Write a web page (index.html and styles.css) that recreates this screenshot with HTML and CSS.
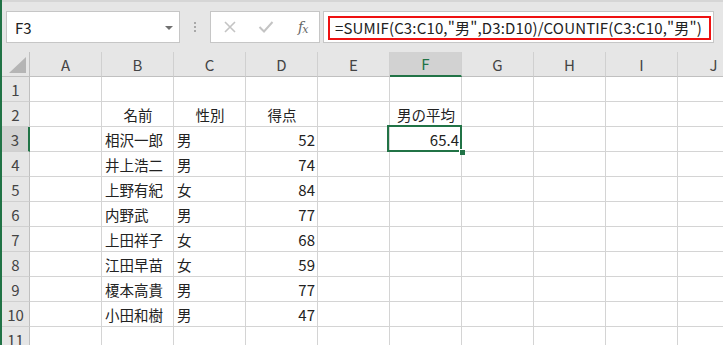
FILE: index.html
```html
<!DOCTYPE html>
<html lang="ja">
<head>
  <meta charset="UTF-8" />
  <title>SUMIF / COUNTIF</title>
  <link rel="stylesheet" href="styles.css">
</head>
<body>
  <div class="window">
    <!-- 数式バー -->
    <div class="formula-row">
      <div class="name-box">
        <span>F3</span>
        <span class="drop"></span>
      </div>
      <div class="grip"><i></i><i></i><i></i></div>
      <div class="fx-buttons">
        <svg class="ico cancel" width="14" height="14" viewBox="0 0 14 14"><path d="M2 2 L12 12 M12 2 L2 12" stroke="#c4c4c4" stroke-width="1.6" fill="none"/></svg>
        <svg class="ico ok" width="16" height="14" viewBox="0 0 16 14"><path d="M1.5 7 L6 11.5 L14.5 2" stroke="#c4c4c4" stroke-width="2" fill="none"/></svg>
        <span class="fx">f<sub>x</sub></span>
      </div>
      <div class="formula-box">
        <span class="formula">=SUMIF(C3:C10,"男",D3:D10)/COUNTIF(C3:C10,"男")</span>
      </div>
    </div>

    <!-- シート -->
    <div class="sheet">
      <div class="corner"><span class="tri"></span></div>
      <div class="col-head">A</div>
      <div class="col-head">B</div>
      <div class="col-head">C</div>
      <div class="col-head">D</div>
      <div class="col-head">E</div>
      <div class="col-head active">F</div>
      <div class="col-head">G</div>
      <div class="col-head">H</div>
      <div class="col-head">I</div>
      <div class="col-head">J</div>

      <div class="row-head">1</div>
      <div class="cell"></div><div class="cell"></div><div class="cell"></div><div class="cell"></div><div class="cell"></div><div class="cell"></div><div class="cell"></div><div class="cell"></div><div class="cell"></div><div class="cell"></div>

      <div class="row-head">2</div>
      <div class="cell"></div>
      <div class="cell center">名前</div>
      <div class="cell center">性別</div>
      <div class="cell center">得点</div>
      <div class="cell"></div>
      <div class="cell center">男の平均</div>
      <div class="cell"></div><div class="cell"></div><div class="cell"></div><div class="cell"></div>

      <div class="row-head active">3</div>
      <div class="cell"></div>
      <div class="cell">相沢一郎</div>
      <div class="cell">男</div>
      <div class="cell num">52</div>
      <div class="cell"></div>
      <div class="cell num selected">65.4</div>
      <div class="cell"></div><div class="cell"></div><div class="cell"></div><div class="cell"></div>

      <div class="row-head">4</div>
      <div class="cell"></div><div class="cell">井上浩二</div><div class="cell">男</div><div class="cell num">74</div>
      <div class="cell"></div><div class="cell"></div><div class="cell"></div><div class="cell"></div><div class="cell"></div><div class="cell"></div>

      <div class="row-head">5</div>
      <div class="cell"></div><div class="cell">上野有紀</div><div class="cell">女</div><div class="cell num">84</div>
      <div class="cell"></div><div class="cell"></div><div class="cell"></div><div class="cell"></div><div class="cell"></div><div class="cell"></div>

      <div class="row-head">6</div>
      <div class="cell"></div><div class="cell">内野武</div><div class="cell">男</div><div class="cell num">77</div>
      <div class="cell"></div><div class="cell"></div><div class="cell"></div><div class="cell"></div><div class="cell"></div><div class="cell"></div>

      <div class="row-head">7</div>
      <div class="cell"></div><div class="cell">上田祥子</div><div class="cell">女</div><div class="cell num">68</div>
      <div class="cell"></div><div class="cell"></div><div class="cell"></div><div class="cell"></div><div class="cell"></div><div class="cell"></div>

      <div class="row-head">8</div>
      <div class="cell"></div><div class="cell">江田早苗</div><div class="cell">女</div><div class="cell num">59</div>
      <div class="cell"></div><div class="cell"></div><div class="cell"></div><div class="cell"></div><div class="cell"></div><div class="cell"></div>

      <div class="row-head">9</div>
      <div class="cell"></div><div class="cell">榎本高貴</div><div class="cell">男</div><div class="cell num">77</div>
      <div class="cell"></div><div class="cell"></div><div class="cell"></div><div class="cell"></div><div class="cell"></div><div class="cell"></div>

      <div class="row-head">10</div>
      <div class="cell"></div><div class="cell">小田和樹</div><div class="cell">男</div><div class="cell num">47</div>
      <div class="cell"></div><div class="cell"></div><div class="cell"></div><div class="cell"></div><div class="cell"></div><div class="cell"></div>

      <div class="row-head">11</div>
      <div class="cell"></div><div class="cell"></div><div class="cell"></div><div class="cell"></div><div class="cell"></div><div class="cell"></div><div class="cell"></div><div class="cell"></div><div class="cell"></div><div class="cell"></div>
    </div>
  </div>
</body>
</html>
```

FILE: styles.css
```css
:root {
  --green: #217346;
  --bar: #e6e6e6;
  --head-line: #c0c0c0;
  --grid: #d4d4d4;
  --head-active: #d2d2d2;
  --text: #222;
  --muted: #444;
}

body {
  margin: 0;
  padding: 0;
  background-color: #fff;
  color: var(--text);
  font-family: 'Noto Sans CJK JP', 'Noto Sans', sans-serif;
  overflow: hidden;
}

.window {
  border-left: 2px solid var(--green);
  height: 345px;
  box-sizing: border-box;
  overflow: hidden;
}

/* 数式バー */
.formula-row {
  height: 52px;
  box-sizing: border-box;
  background-color: var(--bar);
  border-top: 2px solid #d6d6d6;
  display: flex;
  align-items: flex-start;
  padding-top: 9px;
  padding-left: 4px;
}

.name-box {
  width: 174px;
  height: 32px;
  box-sizing: border-box;
  background-color: #fff;
  border: 1px solid #c6c6c6;
  display: flex;
  align-items: center;
  justify-content: space-between;
  padding: 0 6px 0 8px;
  font-size: 15px;
  color: var(--text);
}

.drop {
  width: 0;
  height: 0;
  border-left: 4px solid transparent;
  border-right: 4px solid transparent;
  border-top: 4px solid #707070;
  margin-top: 1px;
}

.grip {
  width: 30px;
  height: 32px;
  display: flex;
  flex-direction: column;
  align-items: center;
  justify-content: center;
  gap: 2px;
}

.grip i {
  width: 2px;
  height: 2px;
  background-color: #a8a8a8;
}

.fx-buttons {
  width: 110px;
  height: 32px;
  box-sizing: border-box;
  background-color: #fff;
  border: 1px solid #c6c6c6;
  display: flex;
  align-items: center;
  padding-left: 12px;
}

.ok {
  margin-left: 21px;
}

.fx {
  font-family: 'DejaVu Serif', 'Liberation Serif', serif;
  font-style: italic;
  font-size: 14px;
  color: #666;
  margin-left: 24px;
  letter-spacing: -1px;
}

.fx sub {
  font-size: 11px;
  vertical-align: -1px;
}

.formula-box {
  margin-left: 3px;
  width: 391px;
  height: 32px;
  box-sizing: border-box;
  background-color: #fff;
  border: 1px solid #c6c6c6;
  padding: 4px 0 0 4px;
}

.formula {
  display: block;
  width: 383px;
  height: 24px;
  box-sizing: border-box;
  border: 2px solid #ee1111;
  padding-left: 5px;
  font-size: 15px;
  letter-spacing: 0.16px;
  line-height: 20px;
  white-space: nowrap;
  color: var(--text);
}

/* シート */
.sheet {
  display: grid;
  grid-template-columns: 28px repeat(10, 72px);
  grid-auto-rows: 25px;
  font-size: 14.5px;
}

.corner,
.col-head,
.row-head {
  background-color: var(--bar);
  box-sizing: border-box;
  color: var(--muted);
  display: flex;
  align-items: center;
  justify-content: center;
  font-size: 15px;
}

.corner {
  border-right: 1px solid var(--head-line);
  border-bottom: 1px solid var(--head-line);
  align-items: flex-end;
  justify-content: flex-end;
  padding: 0 3px 3px 0;
}

.tri {
  width: 0;
  height: 0;
  border-left: 17px solid transparent;
  border-bottom: 16px solid #b5b5b5;
}

.col-head {
  border-right: 1px solid #d0d0d0;
  border-bottom: 1px solid var(--head-line);
}

.col-head.active {
  background-color: var(--head-active);
  border-bottom: 2px solid var(--green);
  color: var(--green);
}

.row-head {
  border-right: 1px solid var(--head-line);
  border-bottom: 1px solid #d0d0d0;
}

.row-head.active {
  background-color: var(--head-active);
  border-right: 2px solid var(--green);
}

.cell {
  box-sizing: border-box;
  border-right: 1px solid var(--grid);
  border-bottom: 1px solid var(--grid);
  display: flex;
  align-items: center;
  padding: 0 2px 0 3px;
  white-space: nowrap;
  color: var(--text);
  position: relative;
}

.cell.center {
  justify-content: center;
}

.cell.num {
  justify-content: flex-end;
  font-size: 15px;
}

/* 選択セル */
.cell.selected::after {
  content: '';
  position: absolute;
  left: -3px;
  top: -2px;
  right: -1px;
  bottom: -1px;
  border: 2px solid var(--green);
}

.cell.selected::before {
  content: '';
  position: absolute;
  right: -4px;
  bottom: -4px;
  width: 5px;
  height: 5px;
  background-color: var(--green);
  border-left: 1px solid #fff;
  border-top: 1px solid #fff;
  z-index: 1;
}
```
